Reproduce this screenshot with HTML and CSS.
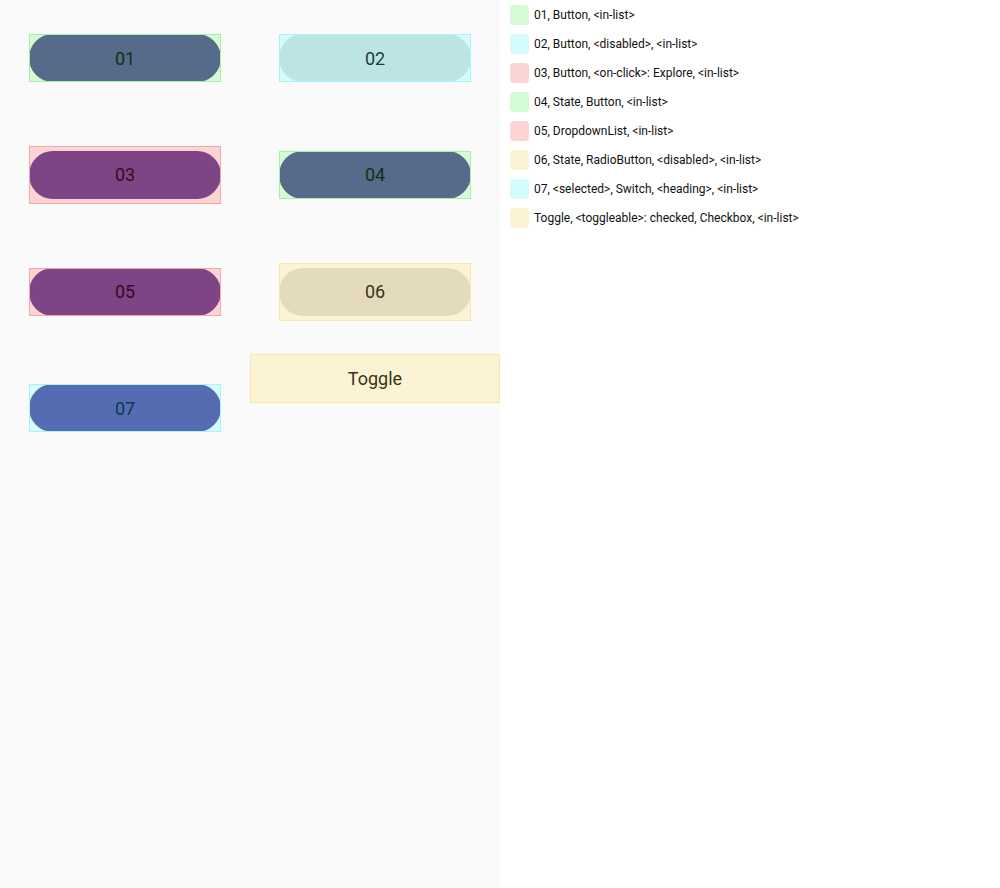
FILE: index.html
```html
<!DOCTYPE html>
<html>
<head>
<meta charset="utf-8">
<link rel="stylesheet" href="styles.css">
</head>
<body>
<div class="page">
  <div class="canvas">
    <div class="cell"><div class="box box-green"><div class="pill pill-01">01</div></div></div>
    <div class="cell"><div class="box box-cyan"><div class="pill pill-02">02</div></div></div>
    <div class="cell"><div class="box box-pink padded"><div class="pill pill-03">03</div></div></div>
    <div class="cell"><div class="box box-green"><div class="pill pill-04">04</div></div></div>
    <div class="cell"><div class="box box-pink"><div class="pill pill-05">05</div></div></div>
    <div class="cell"><div class="box box-yellow padded"><div class="pill pill-06">06</div></div></div>
    <div class="cell"><div class="box box-cyan"><div class="pill pill-07">07</div></div></div>
    <div class="cell cell-top"><div class="toggle">Toggle</div></div>
  </div>
  <div class="legend">
    <div class="row"><span class="sw sw-green"></span>01, Button, &lt;in-list&gt;</div>
    <div class="row"><span class="sw sw-cyan"></span>02, Button, &lt;disabled&gt;, &lt;in-list&gt;</div>
    <div class="row"><span class="sw sw-pink"></span>03, Button, &lt;on-click&gt;: Explore, &lt;in-list&gt;</div>
    <div class="row"><span class="sw sw-green"></span>04, State, Button, &lt;in-list&gt;</div>
    <div class="row"><span class="sw sw-pink"></span>05, DropdownList, &lt;in-list&gt;</div>
    <div class="row"><span class="sw sw-yellow"></span>06, State, RadioButton, &lt;disabled&gt;, &lt;in-list&gt;</div>
    <div class="row"><span class="sw sw-cyan"></span>07, &lt;selected&gt;, Switch, &lt;heading&gt;, &lt;in-list&gt;</div>
    <div class="row"><span class="sw sw-yellow"></span>Toggle, &lt;toggleable&gt;: checked, Checkbox, &lt;in-list&gt;</div>
  </div>
</div>
</body>
</html>
```
FILE: styles.css
```css
html, body {
  margin: 0;
  padding: 0;
  background: #ffffff;
  font-family: Roboto, "Noto Sans", sans-serif;
}
.page {
  display: flex;
  width: 1000px;
  height: 888px;
}
.canvas {
  width: 500px;
  height: 888px;
  background: #fafafa;
  display: grid;
  grid-template-columns: 250px 250px;
  grid-auto-rows: 116.67px;
  align-content: start;
}
.cell {
  display: flex;
  align-items: center;
  justify-content: center;
}
.cell-top {
  align-items: flex-start;
  padding-top: 4px;
}
.box {
  position: relative;
  width: 192px;
  box-sizing: border-box;
}
.box.padded {
  padding: 5px 0;
}
.box::after {
  content: "";
  position: absolute;
  inset: 0;
  border: 1px solid;
  border-color: inherit;
}
.box-green { background: #d4fcd4; border-color: #a6f0a6; }
.box-cyan { background: #d4fcfc; border-color: #a6f6f6; }
.box-pink { background: #fcd4d4; border-color: #f6a8a8; }
.box-yellow { background: #fcf3d4; border-color: #fbe6a2; }
.pill {
  height: 48px;
  border-radius: 24px;
  display: flex;
  align-items: center;
  justify-content: center;
  font-size: 18px;
}
.pill-01, .pill-04 { background: #566a89; color: #0b3311; }
.pill-02 { background: #bce4e4; color: #1d3b3d; }
.pill-03, .pill-05 { background: #7f4486; color: #3a0a1c; }
.pill-06 { background: #e4dbbd; color: #3a3219; }
.pill-07 { background: #566cb2; color: #0b3a45; }
.toggle {
  width: 250px;
  height: 49px;
  box-sizing: border-box;
  background: #fcf3d4;
  border: 1px solid #fbe6a2;
  display: flex;
  align-items: center;
  justify-content: center;
  font-size: 18px;
  color: #3a3219;
}
.legend {
  padding: 5px 10px;
  display: flex;
  flex-direction: column;
  gap: 9px;
}
.row {
  display: flex;
  align-items: center;
  gap: 5px;
  height: 20px;
  font-size: 12px;
  color: #111111;
}
.sw {
  width: 19px;
  height: 20px;
  border-radius: 4px;
  flex: none;
}
.sw-green { background: #d4fcd4; }
.sw-cyan { background: #d4fcfc; }
.sw-pink { background: #fcd4d4; }
.sw-yellow { background: #fcf3d4; }
```
